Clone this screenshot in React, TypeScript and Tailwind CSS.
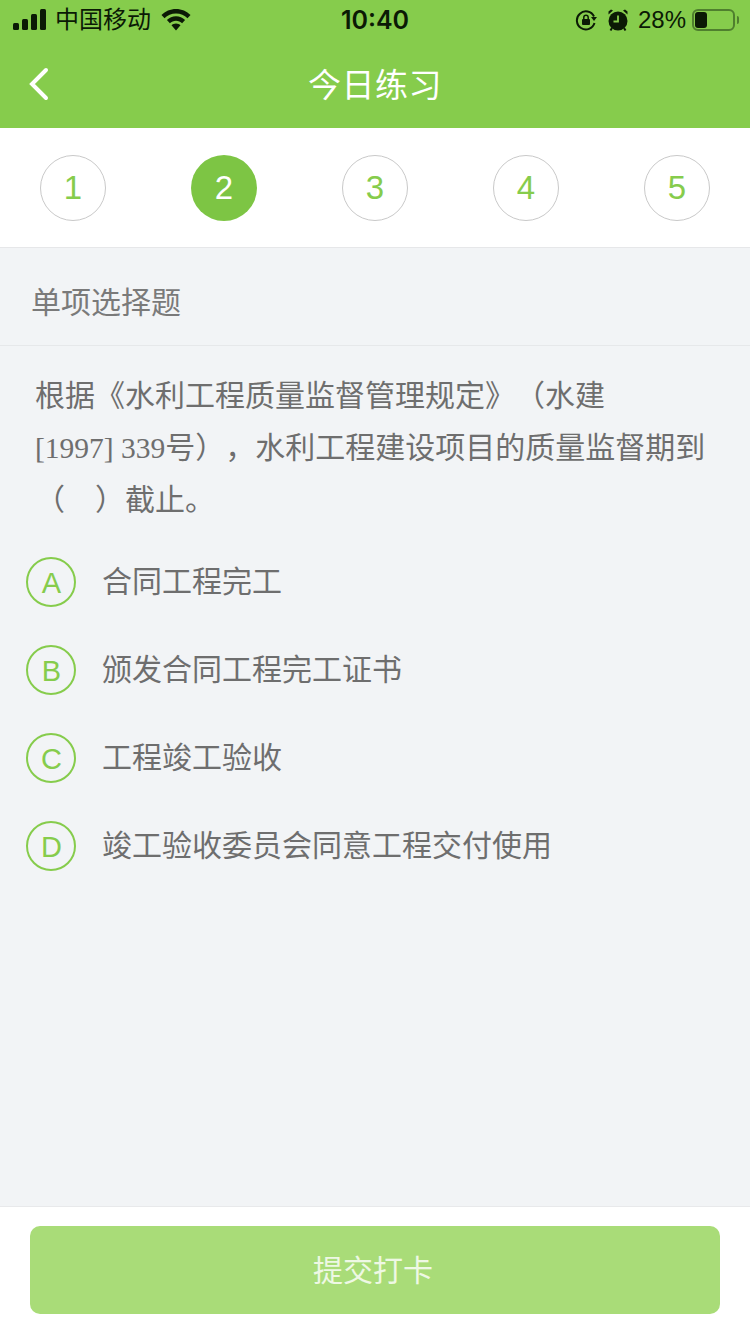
const cjk = "font-['Liberation_Sans','Noto_Sans_CJK_SC',sans-serif]";

const steps = [1, 2, 3, 4, 5];
const options = [
  { key: "A", text: "合同工程完工" },
  { key: "B", text: "颁发合同工程完工证书" },
  { key: "C", text: "工程竣工验收" },
  { key: "D", text: "竣工验收委员会同意工程交付使用" },
];

function StatusBar() {
  return (
    <div className="flex h-[40px] items-center justify-between pl-[13px] pr-[13px] text-[#0b1a05]">
      <div className="flex w-[200px] items-center">
        <svg width="33" height="22" viewBox="0 0 33 22" fill="currentColor">
          <rect x="0" y="14" width="6" height="7" rx="1.5" />
          <rect x="9" y="10" width="6" height="11" rx="1.5" />
          <rect x="18" y="5" width="6" height="16" rx="1.5" />
          <rect x="27" y="0" width="6" height="21" rx="1.5" />
        </svg>
        <span className="ml-[9px] text-[24px] leading-none">中国移动</span>
        <svg className="ml-[10px]" width="30" height="22" viewBox="0 0 30 22" fill="currentColor">
          <path d="M15 0C9.300 0 4.200 2.300.5 6l3 3.300C6.400 6.300 10.500 4.500 15 4.500s8.600 1.800 11.500 4.800l3-3.300C25.800 2.300 20.700 0 15 0z" />
          <path d="M15 7.300C11.500 7.300 8.300 8.700 5.900 11L8.900 14.300c1.600-1.500 3.700-2.500 6.100-2.500s4.500 1 6.100 2.500l3-3.300C21.700 8.700 18.500 7.300 15 7.300z" />
          <path d="M15 14.500c-1.800 0-3.400.7-4.500 1.800L15 21.500l4.500-5.200c-1.100-1.100-2.700-1.800-4.500-1.800z" />
        </svg>
      </div>
      <span className="font-['Inter',sans-serif] text-[25px] font-semibold leading-none">10:40</span>
      <div className="flex w-[200px] items-center justify-end">
        <svg width="22" height="22" viewBox="0 0 22 22" fill="none" stroke="currentColor" strokeWidth="2">
          <path d="M19 7.500A9 9 0 1 0 19.500 14" />
          <path d="M16 8h6l-3 4z" fill="currentColor" stroke="none" />
          <rect x="7" y="10" width="8" height="6" rx="1" fill="currentColor" stroke="none" />
          <path d="M8.800 10V8.500a2.200 2.200 0 0 1 4.400 0V10" strokeWidth="1.500" />
        </svg>
        <svg className="ml-[11px]" width="20" height="22" viewBox="0 0 20 22" fill="currentColor">
          <circle cx="10" cy="12" r="9.500" />
          <path d="M.5 5.500 5 1.500 3 .5.500 2.500zM19.500 5.500 15 1.500 17 .5l2.500 2z" />
          <path d="M4 19 2.500 21.500M16 19l1.500 2.500" stroke="currentColor" strokeWidth="2" />
          <path d="M10 6.500V12.500H5.500" fill="none" stroke="#86cc4c" strokeWidth="1.800" />
        </svg>
        <span className="ml-[10px] text-[24px] leading-none">28%</span>
        <div className="relative ml-[6px] mr-[2px] h-[22px] w-[43px] rounded-[6px] border-2 border-[#4f7f2e] p-[1px]">
          <div className="h-full w-[12px] rounded-[3px] bg-[#0b1a05]" />
          <div className="absolute right-[-6px] top-[5px] h-[8px] w-[2px] rounded-r bg-[#4f7f2e]" />
        </div>
      </div>
    </div>
  );
}

export default function App() {
  return (
    <div className={`flex h-[1334px] w-[750px] flex-col bg-[#f2f4f6] ${cjk}`}>
      <header className="h-[128px] shrink-0 bg-[#86cc4c]">
        <StatusBar />
        <div className="relative flex h-[88px] items-center justify-center pt-[3px]">
          <svg className="absolute left-[28px] top-[27px]" width="22" height="34" viewBox="0 0 22 34" fill="none" stroke="#fff" strokeWidth="4" strokeLinecap="round">
            <path d="M18 3 4 17l14 14" />
          </svg>
          <h1 className="text-[33px] font-normal tracking-[0.5px] text-white">今日练习</h1>
        </div>
      </header>

      <div className="flex h-[120px] shrink-0 items-center justify-between border-b border-[#e6e7e9] bg-white pl-[40px] pr-[40px]">
        {steps.map((n) =>
          n === 2 ? (
            <div key={n} className="flex h-[66px] w-[66px] items-center justify-center rounded-full bg-[#7dc544] text-[33px] text-white">
              {n}
            </div>
          ) : (
            <div key={n} className="flex h-[66px] w-[66px] items-center justify-center rounded-full border border-[#c9c9c9] bg-white text-[33px] text-[#86cc4c]">
              {n}
            </div>
          ),
        )}
      </div>

      <div className="flex h-[98px] shrink-0 items-center border-b border-[#e6e8ea] pl-[31px] pt-[11px] text-[30px] text-[#7a7a7a]">
        单项选择题
      </div>

      <main className="flex-1 overflow-hidden">
        <p className="mt-[24px] whitespace-nowrap pl-[35px] text-[30px] leading-[52px] text-[#6e6e6e] [text-spacing-trim:space-all]">
          根据《水利工程质量监督管理规定》（水建
          <br />
          <span className="font-['Liberation_Serif','Noto_Sans_CJK_SC',serif] text-[29.500px]">[1997] 339</span>号），水利工程建设项目的质量监督期到
          <br />
          （　）截止。
        </p>

        <ul className="mt-[12px] pl-[26px]">
          {options.map((o) => (
            <li key={o.key} className="flex h-[88px] items-center">
              <div className="flex h-[50px] w-[50px] shrink-0 items-center justify-center rounded-full border-2 border-[#86cc4c] pl-[1px] pt-[3px] text-[29px] text-[#86cc4c]">
                {o.key}
              </div>
              <span className="mb-[2px] ml-[26px] text-[30px] text-[#6e6e6e]">{o.text}</span>
            </li>
          ))}
        </ul>
      </main>

      <footer className="flex h-[128px] shrink-0 items-start justify-center border-t border-[#e8e9eb] bg-white pt-[19px]">
        <button className="h-[88px] w-[690px] rounded-[10px] bg-[#a9dc78] pr-[4px] text-[30px] text-white/80">提交打卡</button>
      </footer>
    </div>
  );
}
